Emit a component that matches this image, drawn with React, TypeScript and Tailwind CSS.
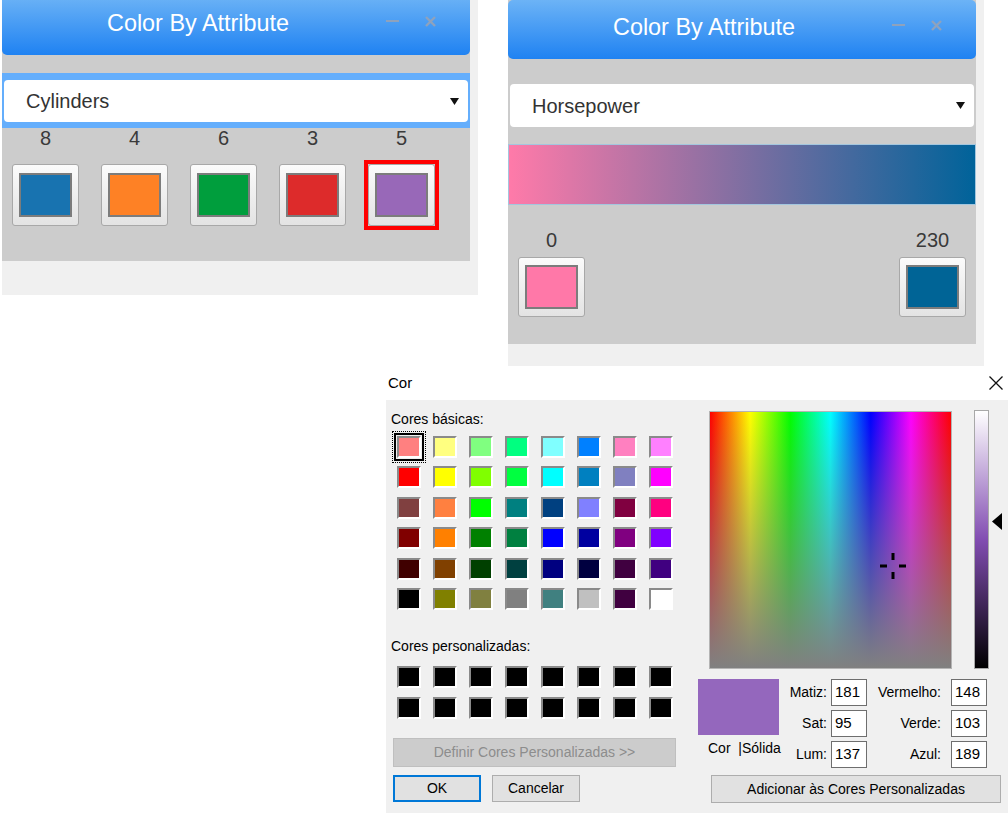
import React from 'react';

const cylinders = [
  { label: '8', color: 'bg-[#1873b0]' },
  { label: '4', color: 'bg-[#fe8125]' },
  { label: '6', color: 'bg-[#009e3d]' },
  { label: '3', color: 'bg-[#dd2b2b]' },
  { label: '5', color: 'bg-[#9868b8]', selected: true },
];

// Windows ChooseColor basic palette
const basicColors = [
  ['bg-[#ff8080]', 'bg-[#ffff80]', 'bg-[#80ff80]', 'bg-[#00ff80]', 'bg-[#80ffff]', 'bg-[#0080ff]', 'bg-[#ff80c0]', 'bg-[#ff80ff]'],
  ['bg-[#ff0000]', 'bg-[#ffff00]', 'bg-[#80ff00]', 'bg-[#00ff40]', 'bg-[#00ffff]', 'bg-[#0080c0]', 'bg-[#8080c0]', 'bg-[#ff00ff]'],
  ['bg-[#804040]', 'bg-[#ff8040]', 'bg-[#00ff00]', 'bg-[#008080]', 'bg-[#004080]', 'bg-[#8080ff]', 'bg-[#800040]', 'bg-[#ff0080]'],
  ['bg-[#800000]', 'bg-[#ff8000]', 'bg-[#008000]', 'bg-[#008040]', 'bg-[#0000ff]', 'bg-[#0000a0]', 'bg-[#800080]', 'bg-[#8000ff]'],
  ['bg-[#400000]', 'bg-[#804000]', 'bg-[#004000]', 'bg-[#004040]', 'bg-[#000080]', 'bg-[#000040]', 'bg-[#400040]', 'bg-[#400080]'],
  ['bg-[#000000]', 'bg-[#808000]', 'bg-[#808040]', 'bg-[#808080]', 'bg-[#408080]', 'bg-[#c0c0c0]', 'bg-[#400040]', 'bg-[#ffffff]'],
];

function PanelHeader() {
  return (
    <div className="flex h-[59px] items-center rounded-[5px] bg-[linear-gradient(to_bottom,#6cb3f6,#1f82f2)] pl-[105px] pr-[34px]">
      <span className="pb-[3px] text-[23.4px] text-white">Color By Attribute</span>
      <div className="mb-[9px] ml-auto flex items-center gap-[26px]">
        <span className="block h-[2px] w-[13px] bg-[#8ea2bd]" />
        <svg width="11" height="11" viewBox="0 0 11 11">
          <path d="M1 1L10 10M10 1L1 10" stroke="#8ea2bd" strokeWidth="2.4" />
        </svg>
      </div>
    </div>
  );
}

function SelectBox({ value, h }: { value: string; h: string }) {
  return (
    <div className={`mx-[2px] flex ${h} items-center rounded-[4px] bg-white pl-[22px] pr-[9px]`}>
      <span className="text-[20px] text-[#333]">{value}</span>
      <svg className="ml-auto" width="9" height="7" viewBox="0 0 9 7">
        <polygon points="0,0 9,0 4.5,7" fill="#111" />
      </svg>
    </div>
  );
}

function SwatchButton({ color, h = 'h-[62px]' }: { color: string; h?: string }) {
  return (
    <div className={`flex ${h} w-[67px] items-center justify-center rounded-[3px] border border-[#a8a8a8] bg-[linear-gradient(to_bottom,#fbfbfb,#e3e3e3)]`}>
      <div className={`h-[44px] w-[53px] border-2 border-[#7c7c7c] ${color}`} />
    </div>
  );
}

function Cell({ color, selected }: { color: string; selected?: boolean }) {
  return (
    <div
      className={`h-[22px] w-[24px] border-2 border-t-[#8a8a8a] border-l-[#8a8a8a] border-r-white border-b-white ${color} ${
        selected ? 'shadow-[0_0_0_1px_#f0f0f0,0_0_0_3px_#000] outline-1 outline-dotted outline-black outline-offset-[4px]' : ''
      }`}
    />
  );
}

function ValueRow({ l1, v1, l2, v2 }: { l1: string; v1: string; l2: string; v2: string }) {
  return (
    <div className="flex h-[27px] items-center">
      <span className="w-[48px] text-right text-[14px]">{l1}</span>
      <div className="ml-[4px] flex h-[27px] w-[36px] items-center border border-[#6e6e6e] bg-white pl-[3px] text-[15px]">{v1}</div>
      <span className="w-[74px] text-right text-[14px]">{l2}</span>
      <div className="ml-[10px] flex h-[27px] w-[36px] items-center border border-[#6e6e6e] bg-white pl-[3px] text-[15px]">{v2}</div>
    </div>
  );
}

export default function App() {
  return (
    <div className="h-[813px] w-[1008px] overflow-hidden bg-white font-['Liberation_Sans',Arial,sans-serif]">
      <div className="flex h-[366px] items-start">
        {/* Categorical panel */}
        <div className="-mt-[4px] ml-[2px] w-[476px] bg-[#f0f0f0] pb-[34px] pr-[8px]">
          <div className="bg-[#cccccc] pb-[35px]">
            <PanelHeader />
            <div className="mt-[18px] bg-[#64aefc] px-0 pb-[6px] pt-[7px]">
              <SelectBox value="Cylinders" h="h-[42px]" />
            </div>
            <div className="flex gap-[22px] pl-[10px]">
              {cylinders.map((c) => (
                <div key={c.label} className="flex w-[67px] flex-col items-center">
                  <span className="text-[20px] leading-[20px] text-[#3a3a3a]">{c.label}</span>
                  <div className={`mt-[16px] ${c.selected ? 'outline-4 outline-[#ff0000]' : ''}`}>
                    <SwatchButton color={c.color} />
                  </div>
                </div>
              ))}
            </div>
          </div>
        </div>

        {/* Continuous panel */}
        <div className="ml-[30px] w-[476px] bg-[#f0f0f0] pb-[22px] pr-[8px]">
          <div className="bg-[#cccccc] pb-[27px]">
            <PanelHeader />
            <div className="mt-[25px]">
              <SelectBox value="Horsepower" h="h-[43px]" />
            </div>
            <div className="mt-[17px] h-[61px] border border-[#a3c6de] bg-[linear-gradient(to_right,#ff7aa9,#00639a)]" />
            <div className="mt-[25px] flex justify-between px-[10px]">
              <div className="flex w-[67px] flex-col items-center">
                <span className="text-[20px] leading-[20px] text-[#3a3a3a]">0</span>
                <div className="mt-[7px]">
                  <SwatchButton color="bg-[#ff78a8]" h="h-[60px]" />
                </div>
              </div>
              <div className="flex w-[67px] flex-col items-center">
                <span className="text-[20px] leading-[20px] text-[#3a3a3a]">230</span>
                <div className="mt-[7px]">
                  <SwatchButton color="bg-[#006496]" h="h-[60px]" />
                </div>
              </div>
            </div>
          </div>
        </div>
      </div>

      {/* Windows color dialog */}
      <div className="ml-[386px] w-[622px] text-black">
        <div className="flex h-[34px] items-center justify-between pl-[2px] pr-[5px]">
          <span className="text-[15px]">Cor</span>
          <svg width="14" height="14" viewBox="0 0 14 14">
            <path d="M0.5 0.5L13.5 13.5M13.5 0.5L0.5 13.5" stroke="#111" strokeWidth="1.3" />
          </svg>
        </div>
        <div className="flex h-[413px] bg-[#f0f0f0]">
          <div className="w-[312px] pl-[5px] pt-[11px]">
            <div className="text-[14px] leading-[17px]">Cores básicas:</div>
            <div className="ml-[6px] mt-[8px] grid grid-cols-[repeat(8,24px)] gap-x-[12px] gap-y-[8.4px]">
              {basicColors.flat().map((c, i) => (
                <Cell key={i} color={c} selected={i === 0} />
              ))}
            </div>
            <div className="mt-[28px] text-[14px] leading-[17px]">Cores personalizadas:</div>
            <div className="ml-[6px] mt-[11px] grid grid-cols-[repeat(8,24px)] gap-x-[12px] gap-y-[9px]">
              {Array.from({ length: 16 }).map((_, i) => (
                <Cell key={i} color="bg-black" />
              ))}
            </div>
            <div className="ml-[2px] mt-[19px] flex h-[29px] w-[283px] items-center justify-center border border-[#bfbfbf] bg-[#cccccc] text-[14px] text-[#8d8d8d]">
              Definir Cores Personalizadas &gt;&gt;
            </div>
            <div className="ml-[2px] mt-[8px] flex gap-[11px]">
              <div className="flex h-[27px] w-[88px] items-center justify-center border-2 border-[#0078d7] bg-[#e1e1e1] text-[14px]">
                OK
              </div>
              <div className="flex h-[27px] w-[88px] items-center justify-center border border-[#adadad] bg-[#e1e1e1] text-[14px]">
                Cancelar
              </div>
            </div>
          </div>

          <div className="flex-1 pt-[10px]">
            <div className="flex items-start">
              <div className="relative ml-[11px] mt-[1px] h-[258px] w-[243px] border border-[#b4b4b4] bg-[linear-gradient(to_bottom,rgba(128,128,128,0),#808080),linear-gradient(to_right,#ff0000,#ffff00,#00ff00,#00ffff,#0000ff,#ff00ff,#ff0000)]">
                <svg className="absolute left-[169px] top-[140px]" width="28" height="28" viewBox="0 0 28 28">
                  <rect x="12.5" y="1" width="3" height="7" fill="#000" />
                  <rect x="12.5" y="20" width="3" height="7" fill="#000" />
                  <rect x="1" y="12.5" width="7" height="3" fill="#000" />
                  <rect x="20" y="12.5" width="7" height="3" fill="#000" />
                </svg>
              </div>
              <div className="ml-[22px] h-[259px] w-[15px] border border-[#a8a8a8] bg-[linear-gradient(to_bottom,#ffffff,#824db2,#000000)]" />
              <svg className="ml-[3px] mt-[103px]" width="10" height="17" viewBox="0 0 10 17">
                <polygon points="0,8.5 10,0 10,17" fill="#000" />
              </svg>
            </div>

            <div className="mt-[10px] flex">
              <div className="w-[81px]">
                <div className="h-[56px] w-[81px] bg-[#9467bd]" />
                <div className="mt-[5px] whitespace-pre pl-[10px] text-[14px] leading-[17px]">Cor  |Sólida</div>
              </div>
              <div className="flex flex-col gap-[4px]">
                <ValueRow l1="Matiz:" v1="181" l2="Vermelho:" v2="148" />
                <ValueRow l1="Sat:" v1="95" l2="Verde:" v2="103" />
                <ValueRow l1="Lum:" v1="137" l2="Azul:" v2="189" />
              </div>
            </div>

            <div className="ml-[13px] mt-[7px] flex h-[28px] w-[290px] items-center justify-center border border-[#adadad] bg-[#e1e1e1] text-[14px]">
              Adicionar às Cores Personalizadas
            </div>
          </div>
        </div>
      </div>
    </div>
  );
}
